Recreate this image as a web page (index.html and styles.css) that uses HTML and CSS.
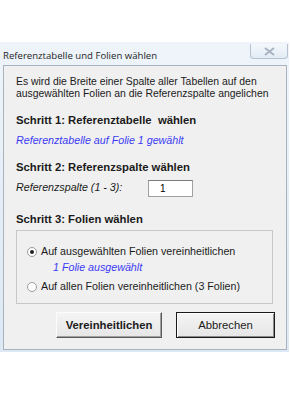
FILE: index.html
```html
<!DOCTYPE html>
<html lang="de">
<head>
    <meta charset="UTF-8">
    <meta name="viewport" content="width=device-width, initial-scale=1.0">
    <title>Referenztabelle und Folien wählen</title>
    <link rel="stylesheet" href="styles.css">
</head>
<body>
    <div class="window">
        <div class="titlebar">
            <span class="title">Referenztabelle und Folien wählen</span>
            <div class="close">
                <svg width="11" height="9" viewBox="0 0 11 9">
                    <path d="M1 1 L10 8 M10 1 L1 8" stroke="#a8b4c2" stroke-width="2" fill="none"/>
                </svg>
            </div>
        </div>
        <div class="panel">
            <p class="intro">Es wird die Breite einer Spalte aller Tabellen auf den<br>ausgewählten Folien an die Referenzspalte angelichen</p>

            <h2 class="step step-1">Schritt 1: Referenztabelle&nbsp; wählen</h2>
            <p class="info">Referenztabelle auf Folie 1 gewählt</p>

            <h2 class="step step-2">Schritt 2: Referenzspalte wählen</h2>
            <div class="field">
                <label for="refCol">Referenzspalte (1 - 3):</label>
                <input type="text" id="refCol" value="1">
            </div>

            <h2 class="step step-3">Schritt 3: Folien wählen</h2>
            <div class="group">
                <div class="option">
                    <span class="radio checked"></span>
                    <span>Auf ausgewählten Folien vereinheitlichen</span>
                </div>
                <p class="info sub">1 Folie ausgewählt</p>
                <div class="option option-2">
                    <span class="radio"></span>
                    <span>Auf allen Folien vereinheitlichen (3 Folien)</span>
                </div>
            </div>

            <div class="buttons">
                <button class="btn btn-ok">Vereinheitlichen</button>
                <button class="btn btn-cancel">Abbrechen</button>
            </div>
        </div>
    </div>
</body>
</html>
```

FILE: styles.css
```css
body {
    margin: 0;
    padding: 0;
    background: #fff;
    font-family: "Liberation Sans", Arial, sans-serif;
    color: #1b1b1b;
}
.window {
    margin-top: 42px;
    width: 289px;
    background: linear-gradient(#eef4fa, #dce8f4);
    padding: 0 2px 2px 3px;
    box-sizing: border-box;
}
.titlebar {
    height: 23px;
    display: flex;
    align-items: flex-start;
    justify-content: space-between;
}
.title {
    font-family: "Open Sans", "Noto Sans", sans-serif;
    font-size: 9.6px;
    color: #1e1e1e;
    margin: 7px 0 0 0;
}
.close {
    width: 36px;
    height: 14px;
    margin: 2px -1px 0 0;
    border: 1px solid #b4c2d2;
    border-top: none;
    border-radius: 0 0 4px 4px;
    background: linear-gradient(#f4f8fc, #e2ebf5);
    display: flex;
    align-items: center;
    justify-content: center;
}
.panel {
    background: #f0f0f0;
    border: 1px solid #a9b3bf;
    padding: 10px 11px 11px 12px;
    font-size: 10.7px;
    line-height: 13px;
}
.intro {
    margin: 0;
    line-height: 12px;
    font-size: 10.4px;
    white-space: nowrap;
}
.step {
    font-size: 11.3px;
    line-height: 13px;
    font-weight: bold;
    margin: 0;
}
.step-1 {
    margin-top: 14px;
}
.step-2 {
    margin-top: 14px;
}
.step-3 {
    margin-top: 16px;
}
.info {
    margin: 7px 0 0 0;
    color: #3b3bf5;
    font-style: italic;
}
.field {
    display: flex;
    align-items: center;
    margin-top: 6px;
    height: 17px;
}
.field label {
    font-style: italic;
    width: 132px;
    margin-top: -2px;
}
.field input {
    width: 45px;
    height: 17px;
    box-sizing: border-box;
    border: 1px solid #a0a0a0;
    border-top-color: #7a7a7a;
    background: #fff;
    font-family: "Liberation Sans", Arial, sans-serif;
    font-size: 10px;
    padding: 0 0 0 11px;
    margin: 0;
}
.group {
    margin-top: 4px;
    border: 1px solid #c8c8c8;
    padding: 14px 0 10px 10px;
    width: 257px;
    box-sizing: border-box;
}
.option {
    display: flex;
    align-items: center;
    gap: 4px;
}
.option-2 {
    margin-top: 6px;
}
.radio {
    width: 8px;
    height: 8px;
    border: 1px solid #9a9a9a;
    border-radius: 50%;
    background: #fff;
    position: relative;
}
.radio.checked::after {
    content: "";
    position: absolute;
    left: 2px;
    top: 2px;
    width: 4px;
    height: 4px;
    border-radius: 50%;
    background: #222;
}
.sub {
    margin: 3px 0 0 26px;
}
.buttons {
    display: flex;
    justify-content: flex-end;
    gap: 14px;
    margin-top: 8px;
}
.btn {
    height: 26px;
    font-family: "Liberation Sans", Arial, sans-serif;
    font-size: 11.3px;
    color: #1b1b1b;
    background: linear-gradient(#f4f4f4, #e6e6e6);
    border: 1px solid;
    border-color: #fcfcfc #5a5a5a #5a5a5a #fcfcfc;
    box-shadow: inset -1px -1px 0 #a0a0a0;
    padding: 0;
}
.btn-ok {
    width: 106px;
    font-weight: bold;
}
.btn-cancel {
    width: 99px;
    border: 1px solid #1a1a1a;
    box-shadow: inset 1px 1px 0 #fff, inset -1px -1px 0 #8a8a8a;
}
```
